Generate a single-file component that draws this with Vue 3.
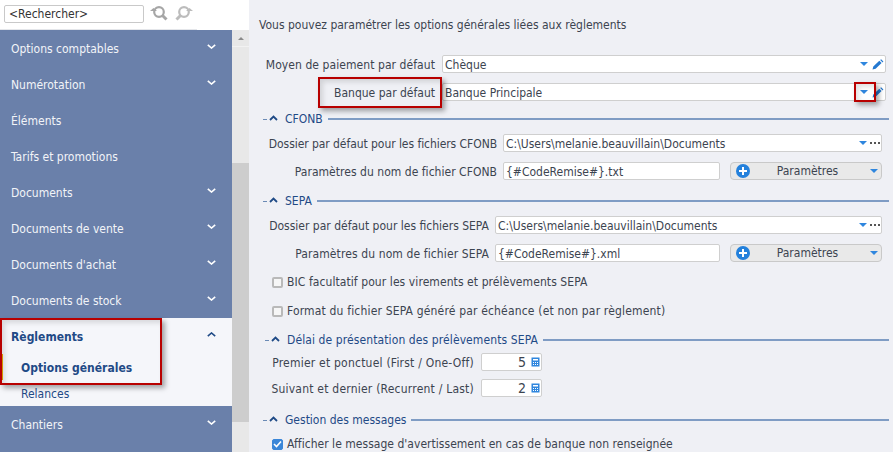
<script setup>
const menuTop = ['Options comptables', 'Numérotation', 'Éléments', 'Tarifs et promotions', 'Documents', 'Documents de vente', "Documents d'achat", 'Documents de stock']
const noChevron = ['Éléments', 'Tarifs et promotions']
</script>

<template>
  <div class="app">
    <aside class="side">
      <div class="searchbar">
        <div class="search">&lt;Rechercher&gt;</div>
        <svg class="sicon" width="20" height="20" viewBox="0 0 20 20"><circle cx="9" cy="8" r="4.800" fill="none" stroke="#a6a6a6" stroke-width="2.200"/><path d="M12.500 11.500l4 4" stroke="#a6a6a6" stroke-width="3"/><path d="M0 7l3.500-3L7 7z" fill="#a6a6a6"/></svg>
        <svg class="sicon" width="20" height="20" viewBox="0 0 20 20"><circle cx="11" cy="8" r="4.800" fill="none" stroke="#bcbcbc" stroke-width="2.200"/><path d="M7.500 11.500l-4 4" stroke="#bcbcbc" stroke-width="3"/><path d="M13 7l3.500-3L20 7z" fill="#bcbcbc"/></svg>
      </div>
      <div class="sidebody">
        <nav class="menu">
          <div v-for="m in menuTop" :key="m" class="mi">
            <span>{{ m }}</span>
            <svg v-if="!noChevron.includes(m)" class="chev" width="9" height="5" viewBox="0 0 9 5"><path d="M.8.8l3.700 3.200L8.200.8" fill="none" stroke="#fff" stroke-width="1.600"/></svg>
          </div>
          <div class="open">
            <div class="mi active">
              <span>Règlements</span>
              <svg class="chev" width="9" height="5" viewBox="0 0 9 5"><path d="M.8 4.200L4.500 1l3.700 3.200" fill="none" stroke="#1f4a86" stroke-width="1.600"/></svg>
            </div>
            <div class="sub cur">Options générales</div>
            <div class="sub">Relances</div>
            <span class="strip"></span>
          </div>
          <div class="mi">
            <span>Chantiers</span>
            <svg class="chev" width="9" height="5" viewBox="0 0 9 5"><path d="M.8.8l3.700 3.200L8.200.8" fill="none" stroke="#fff" stroke-width="1.600"/></svg>
          </div>
        </nav>
        <div class="scroll">
          <div class="sb-btn"><i></i></div>
          <div class="sb-track"><div class="sb-thumb"></div></div>
        </div>
      </div>
    </aside>

    <main class="main">
      <p class="intro">Vous pouvez paramétrer les options générales liées aux règlements</p>

      <div class="row r1">
        <label class="lab l1 wide">Moyen de paiement par défaut</label>
        <div class="inp grow">Chèque
          <span class="tools t1"><svg class="tri" width="8" height="4" viewBox="0 0 8 4"><path d="M0 0h8L4 4z" fill="#2f86de"/></svg><svg width="12" height="11" viewBox="0 0 12 11"><path d="M0.500 10.500l.8-3 6-5.800 2.300 2.300-6 5.800zM8.200 1l.9-.7 2.300 2.200-.8 1z" fill="#2478d0"/></svg></span>
        </div>
      </div>
      <div class="row r2">
        <label class="lab l1">Banque par défaut</label>
        <div class="inp grow">Banque Principale
          <span class="tools t1"><svg class="tri" width="8" height="4" viewBox="0 0 8 4"><path d="M0 0h8L4 4z" fill="#2f86de"/></svg><svg width="12" height="11" viewBox="0 0 12 11"><path d="M0.500 10.500l.8-3 6-5.800 2.300 2.300-6 5.800zM8.200 1l.9-.7 2.300 2.200-.8 1z" fill="#2478d0"/></svg></span>
        </div>
      </div>

      <div class="legend s-cfonb"><span class="dash"></span><svg class="lchev" width="9" height="6" viewBox="0 0 9 6"><path d="M1 5l3.500-3.500L8 5" fill="none" stroke="#1f4a86" stroke-width="1.800"/></svg><span class="lt">CFONB</span><span class="line"></span></div>
      <div class="row r3">
        <label class="lab l2 tight">Dossier par défaut pour les fichiers CFONB</label>
        <div class="inp w379">C:\Users\melanie.beauvillain\Documents
          <span class="tools"><svg class="tri" width="8" height="4" viewBox="0 0 8 4"><path d="M0 0h8L4 4z" fill="#2f86de"/></svg><span class="dots"><i></i><i></i><i></i></span></span>
        </div>
      </div>
      <div class="row r4">
        <label class="lab l2 snug">Paramètres du nom de fichier CFONB</label>
        <div class="inp w217">{#CodeRemise#}.txt</div>
        <div class="btn"><span class="plus"></span><span class="btxt">Paramètres</span><svg width="8" height="4" viewBox="0 0 8 4"><path d="M0 0h8L4 4z" fill="#2f86de"/></svg></div>
      </div>

      <div class="legend s-sepa"><span class="dash"></span><svg class="lchev" width="9" height="6" viewBox="0 0 9 6"><path d="M1 5l3.500-3.500L8 5" fill="none" stroke="#1f4a86" stroke-width="1.800"/></svg><span class="lt">SEPA</span><span class="line"></span></div>
      <div class="row r3b">
        <label class="lab l3">Dossier par défaut pour les fichiers SEPA</label>
        <div class="inp w387">C:\Users\melanie.beauvillain\Documents
          <span class="tools"><svg class="tri" width="8" height="4" viewBox="0 0 8 4"><path d="M0 0h8L4 4z" fill="#2f86de"/></svg><span class="dots"><i></i><i></i><i></i></span></span>
        </div>
      </div>
      <div class="row r4">
        <label class="lab l3 loose">Paramètres du nom de fichier SEPA</label>
        <div class="inp w225">{#CodeRemise#}.xml</div>
        <div class="btn"><span class="plus"></span><span class="btxt">Paramètres</span><svg width="8" height="4" viewBox="0 0 8 4"><path d="M0 0h8L4 4z" fill="#2f86de"/></svg></div>
      </div>

      <div class="chk c1"><span class="box"></span>BIC facultatif pour les virements et prélèvements SEPA</div>
      <div class="chk c2"><span class="box"></span>Format du fichier SEPA généré par échéance (et non par règlement)</div>

      <div class="legend s-delai"><span class="dash"></span><svg class="lchev" width="9" height="6" viewBox="0 0 9 6"><path d="M1 5l3.500-3.500L8 5" fill="none" stroke="#1f4a86" stroke-width="1.800"/></svg><span class="lt">Délai de présentation des prélèvements SEPA</span><span class="line"></span></div>
      <div class="row r5">
        <label class="lab l4">Premier et ponctuel (First / One-Off)</label>
        <div class="inp num">5<svg class="calc" width="9" height="10" viewBox="0 0 9 10"><path d="M.5.5h8v9h-8zM2 2v1.500h5V2zM2 5v1h1V5zM4 5v1h1V5zM6 5v1h1V5zM2 7v1h1V7zM4 7v1h1V7zM6 7v1h1V7z" fill="#2f86de" fill-rule="evenodd"/></svg></div>
      </div>
      <div class="row r6">
        <label class="lab l4">Suivant et dernier (Recurrent / Last)</label>
        <div class="inp num">2<svg class="calc" width="9" height="10" viewBox="0 0 9 10"><path d="M.5.5h8v9h-8zM2 2v1.500h5V2zM2 5v1h1V5zM4 5v1h1V5zM6 5v1h1V5zM2 7v1h1V7zM4 7v1h1V7zM6 7v1h1V7z" fill="#2f86de" fill-rule="evenodd"/></svg></div>
      </div>

      <div class="legend s-msg"><span class="dash"></span><svg class="lchev" width="9" height="6" viewBox="0 0 9 6"><path d="M1 5l3.500-3.500L8 5" fill="none" stroke="#1f4a86" stroke-width="1.800"/></svg><span class="lt">Gestion des messages</span><span class="line"></span></div>
      <div class="chk c3"><span class="box on"><svg width="9" height="8" viewBox="0 0 9 8"><path d="M1 4l2.500 2.500L8 1.500" fill="none" stroke="#fff" stroke-width="1.600"/></svg></span>Afficher le message d'avertissement en cas de banque non renseignée</div>
    </main>

    <div class="mark m1"></div>
    <div class="mark m2"></div>
    <div class="mark m3"></div>
  </div>
</template>

<style>
html, body { margin: 0; padding: 0; }
</style>

<style scoped>
.app { position: relative; width: 893px; height: 452px; overflow: hidden; display: flex; background: #eff0f5; font-family: "DejaVu Sans Condensed", "DejaVu Sans", sans-serif; font-size: 12px; color: #3c4450; }
.side { width: 249px; flex: none; display: flex; flex-direction: column; background: #fff; }
.searchbar { position: relative; height: 30px; box-sizing: border-box; display: flex; align-items: center; padding: 0 0 2px 4px; gap: 3px; }
.searchbar::after { content: ""; position: absolute; left: 0; bottom: 0; width: 197px; height: 1px; background: #e4e6ea; }
.search { width: 140px; height: 18px; box-sizing: border-box; border: 1px solid #c9c9c9; border-radius: 2px; padding-left: 4px; line-height: 17px; color: #333; margin-right: 3px; }
.sicon { flex: none; }
.sidebody { flex: 1; display: flex; min-height: 0; }
.menu { width: 232px; background: #6a80aa; }
.mi { height: 36px; display: flex; align-items: center; justify-content: space-between; padding: 0 16px 0 11px; color: #f2f4f8; }
.mi span { padding-top: 2px; }
.chev { margin-bottom: 3px; }
.open { position: relative; background: #f5f6fa; height: 88px; }
.strip { position: absolute; left: 2px; top: 36px; width: 1px; height: 26px; background: #e8a800; }
.mi.active { color: #1f4a86; font-weight: bold; height: 36px; }
.sub { padding-left: 21px; color: #1f4a86; height: 26px; line-height: 28px; }
.sub.cur { font-weight: bold; height: 27px; line-height: 31px; margin-top: -1px; }
.scroll { width: 17px; background: #e8e8e8; display: flex; flex-direction: column; }
.sb-btn { height: 17px; display: flex; align-items: center; justify-content: center; border-bottom: 1px solid #f2f2f2; box-sizing: border-box; }
.sb-btn i { width: 0; height: 0; border-left: 3px solid transparent; border-right: 3px solid transparent; border-bottom: 3px solid #8a8a8a; }
.sb-track { flex: 1; padding-top: 116px; }
.sb-thumb { height: 259px; background: #cdcdcd; }

.main { flex: 1; min-width: 0; padding-left: 10px; box-sizing: border-box; }
.intro { margin: 17px 0 0; height: 15px; line-height: 17px; }
.row { display: flex; align-items: center; height: 18px; }
.r1 { margin-top: 23px; }
.r2 { margin-top: 10px; }
.r3 { margin-top: 8px; }
.r3b { margin-top: 8px; }
.r4 { margin-top: 10px; }
.r5 { margin-top: 6px; }
.r6 { margin-top: 8px; }
.lab { text-align: right; flex: none; padding-right: 6px; box-sizing: border-box; white-space: nowrap; height: 18px; line-height: 20px; }
.l1 { width: 183px; padding-right: 7px; }
.l2 { width: 244px; }
.l3 { width: 236px; }
.l4 { width: 222px; padding-right: 7px; letter-spacing: .22px; }
.wide { letter-spacing: .07px; }
.tight { letter-spacing: -.06px; }
.snug { letter-spacing: .03px; }
.loose { letter-spacing: .11px; }
.inp { position: relative; height: 18px; box-sizing: border-box; background: #fff; border: 1px solid #cfcfcf; border-radius: 2px; padding-left: 2px; line-height: 18px; color: #3c4450; flex: none; }
.grow { width: 444px; }
.w379 { width: 379px; }
.w387 { width: 387px; }
.w217 { width: 217px; }
.w225 { width: 225px; }
.num { width: 61px; text-align: right; padding-right: 15px; font-size: 14px; line-height: 17px; }
.calc { position: absolute; right: 1px; top: 3px; }
.tools { position: absolute; right: 1px; top: 0; height: 16px; display: flex; align-items: center; gap: 3px; }
.t1 { gap: 4px; }
.tri { flex: none; }
.dots { display: flex; gap: 2px; width: 10px; }
.dots i { width: 2px; height: 2px; background: #555; display: block; flex: none; }
.btn { width: 152px; height: 18px; margin-left: 10px; box-sizing: border-box; background: #e9e9e9; border: 1px solid #c9c9c9; border-radius: 4px; display: flex; align-items: center; padding: 0 3px 0 5px; line-height: 20px; }
.plus { position: relative; width: 14px; height: 14px; border-radius: 50%; background: #2481dc; flex: none; }
.plus::before { content: ""; position: absolute; left: 3px; top: 6px; width: 8px; height: 2px; background: #fff; }
.plus::after { content: ""; position: absolute; left: 6px; top: 3px; width: 2px; height: 8px; background: #fff; }
.btxt { flex: 1; text-align: center; padding-right: 5px; }
.legend { display: flex; align-items: center; height: 14px; color: #1f4a86; }
.lchev { margin-bottom: 3px; }
.dash { width: 4px; height: 1px; background: #6a8ab5; margin-right: 2px; }
.lt { margin: 0 5px 0 7px; white-space: nowrap; }
.line { flex: 1; height: 2px; background: #7f9cc4; margin-right: 4px; }
.s-cfonb { margin: 11px 0 0 4px; }
.s-sepa { margin: 14px 0 0 4px; }
.s-delai { margin: 14px 0 0 6px; letter-spacing: .1px; }
.s-msg { margin: 16px 0 0 4px; }
.chk { display: flex; align-items: center; height: 16px; white-space: nowrap; padding-left: 13px; }
.box { width: 11px; height: 11px; flex: none; box-sizing: border-box; border: 2px solid #b9b9b9; background: #f6f6f6; margin-right: 4px; border-radius: 2px; display: flex; align-items: center; justify-content: center; }
.box.on { background: #3a86d8; border-color: #3a86d8; border-width: 1px; }
.c1 { margin-top: 12px; letter-spacing: .08px; }
.c2 { margin-top: 13px; letter-spacing: .17px; }
.c3 { margin-top: 9px; letter-spacing: .03px; }
.mark { position: absolute; box-sizing: border-box; border: 2px solid #b80000; box-shadow: 3px 3px 5px rgba(0,0,0,.35), inset 3px 3px 5px rgba(0,0,0,.12); }
.m1 { left: 0; top: 318px; width: 162px; height: 67px; }
.m2 { left: 318px; top: 77px; width: 124px; height: 31px; }
.m3 { left: 854px; top: 82px; width: 22px; height: 20px; }
</style>
